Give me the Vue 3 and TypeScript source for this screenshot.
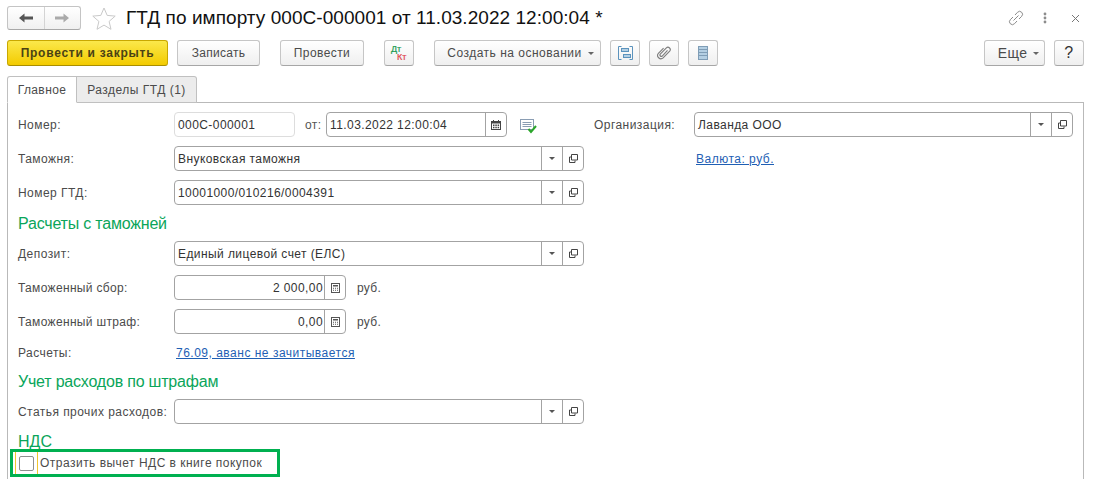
<script setup lang="ts">
const tools = ['Записать', 'Провести']
</script>

<template>
  <div class="page">
    <header class="titlebar">
      <div class="nav">
        <button class="nav-btn">
          <svg width="14" height="10" viewBox="0 0 14 10"><path d="M0 5 5.5 0.5V3.5H14V6.5H5.500V9.500Z" fill="#555" /></svg>
        </button>
        <button class="nav-btn">
          <svg width="14" height="10" viewBox="0 0 14 10"><path d="M14 5 8.500 0.500V3.500H0V6.500H8.500V9.500Z" fill="#aaa" /></svg>
        </button>
      </div>
      <svg class="star" width="24" height="23" viewBox="0 0 24 23"><path d="M12 1l3.200 7.400 8 .7-6.100 5.300 1.900 7.900L12 18.100 5 22.300l1.900-7.900L.8 9.100l8-.7z" fill="#fff" stroke="#c9c9c9" /></svg>
      <h1 class="title">ГТД по импорту 000С-000001 от 11.03.2022 12:00:04 *</h1>
      <div class="win-icons">
        <svg width="16" height="16" viewBox="0 0 16 16" fill="none" stroke="#8c8c8c" stroke-width="1"><path d="M7 5 9.500 2.300a2.900 2.900 0 0 1 4.200 4L11 9M9 11l-2.500 2.700a2.900 2.900 0 0 1-4.200-4L5 7M5.500 10.500l5-5" /></svg>
        <svg class="kebab" width="4" height="12" viewBox="0 0 4 12" fill="#8c8c8c"><circle cx="2" cy="2" r="1.400" /><circle cx="2" cy="6" r="1.400" /><circle cx="2" cy="10" r="1.400" /></svg>
        <svg class="close" width="9" height="9" viewBox="0 0 9 9" stroke="#777" fill="none"><path d="M1 1l7 7M8 1l-7 7" /></svg>
      </div>
    </header>

    <div class="toolbar">
      <button class="btn primary">Провести и закрыть</button>
      <button class="btn save">{{ tools[0] }}</button>
      <button class="btn post">{{ tools[1] }}</button>
      <button class="btn icon dtkt"><span class="dt">Дт</span><span class="kt">Кт</span></button>
      <button class="btn create">Создать на основании<i class="caret"></i></button>
      <button class="btn icon tight">
        <svg width="15" height="14" viewBox="0 0 15 14" fill="none" stroke="#5b93bd"><path d="M3.500.5h-3v13h3M11.500.5h3v13h-3" /><rect x="3.500" y="2.500" width="7" height="3" fill="#b4cfe3" /><rect x="5.500" y="8.500" width="7" height="3" fill="#b4cfe3" /></svg>
      </button>
      <button class="btn icon tight">
        <svg width="14" height="14" viewBox="0 0 16 16" fill="none" stroke="#7d7d7d" stroke-width="1.300"><path d="M12 5 6 11.500a1.600 1.600 0 0 1-2.300-2.200l7-7.200a2.700 2.700 0 0 1 3.800 3.800l-7.500 7.700a3.800 3.800 0 0 1-5.400-5.300L7.500 2.500" /></svg>
      </button>
      <button class="btn icon tight">
        <svg width="10" height="14" viewBox="0 0 10 14" stroke="#7f9db6" fill="#b4cfe3"><rect x=".5" y=".5" width="9" height="13" /><path d="M.5 3.500h9M.5 6.500h9M.5 9.500h9" fill="none" /></svg>
      </button>
      <div class="spacer"></div>
      <button class="btn more">Еще<i class="caret"></i></button>
      <button class="btn help">?</button>
    </div>

    <div class="tabs">
      <div class="tab active">Главное</div>
      <div class="tab">Разделы ГТД (1)</div>
    </div>

    <main class="panel">
      <div class="row">
        <label>Номер:</label>
        <div class="field readonly number"><span class="value">000С-000001</span></div>
        <span class="from">от:</span>
        <div class="field date">
          <span class="value">11.03.2022 12:00:04</span>
          <span class="cell cal">
            <svg width="10" height="10" viewBox="0 0 10 10"><path d="M0 1h10v9H0z" fill="#444" /><path d="M2.500 0v2M7.500 0v2" stroke="#444" /><path d="M1 3.500h8V9H1z" fill="#fff" /><path d="M2 4.500h1.500V6H2zM4.300 4.500h1.500V6H4.300zM6.600 4.500h1.500V6H6.600zM2 6.800h1.500v1.500H2zM4.300 6.800h1.500v1.500H4.300zM6.600 6.800h1.500v1.500H6.600z" fill="#444" /></svg>
          </span>
        </div>
        <svg class="comment" width="17" height="15" viewBox="0 0 17 15"><rect x=".5" y=".5" width="13" height="10" fill="#fff" stroke="#8a9db3" /><path d="M2.500 3.500h9M2.500 5.500h9M2.500 7.500h9" stroke="#8a9db3" /><path d="M8.500 10l2.500 3 5-6" fill="none" stroke="#2aa52a" stroke-width="2" /></svg>
        <label class="org-label">Организация:</label>
        <div class="field org">
          <span class="value">Лаванда ООО</span>
          <span class="cell arrow"><i class="caret small"></i></span>
          <span class="cell open"><svg width="9" height="9" viewBox="0 0 9 9" fill="none" stroke="#444"><path d="M2.500.500h6v5.500h-6zM2.500 3h-2v5.500H6V6.500" /></svg></span>
        </div>
      </div>

      <div class="row">
        <label>Таможня:</label>
        <div class="field wide">
          <span class="value">Внуковская таможня</span>
          <span class="cell arrow"><i class="caret small"></i></span>
          <span class="cell open"><svg width="9" height="9" viewBox="0 0 9 9" fill="none" stroke="#444"><path d="M2.500.500h6v5.500h-6zM2.500 3h-2v5.500H6V6.500" /></svg></span>
        </div>
        <a class="link currency">Валюта: руб.</a>
      </div>

      <div class="row">
        <label>Номер ГТД:</label>
        <div class="field wide">
          <span class="value">10001000/010216/0004391</span>
          <span class="cell arrow"><i class="caret small"></i></span>
          <span class="cell open"><svg width="9" height="9" viewBox="0 0 9 9" fill="none" stroke="#444"><path d="M2.500.500h6v5.500h-6zM2.500 3h-2v5.500H6V6.500" /></svg></span>
        </div>
      </div>

      <h2 class="section">Расчеты с таможней</h2>

      <div class="row">
        <label>Депозит:</label>
        <div class="field wide">
          <span class="value">Единый лицевой счет (ЕЛС)</span>
          <span class="cell arrow"><i class="caret small"></i></span>
          <span class="cell open"><svg width="9" height="9" viewBox="0 0 9 9" fill="none" stroke="#444"><path d="M2.500.500h6v5.500h-6zM2.500 3h-2v5.500H6V6.500" /></svg></span>
        </div>
      </div>

      <div class="row">
        <label class="snug">Таможенный сбор:</label>
        <div class="field sum">
          <span class="value right">2 000,00</span>
          <span class="cell calc"><svg width="9" height="10" viewBox="0 0 9 10"><rect x=".5" y=".5" width="8" height="9" fill="#fff" stroke="#555" /><path d="M2 2h5v1.500H2z" fill="#555" /><path d="M2 4.700h1v1H2zM4 4.700h1v1H4zM6 4.700h1v1H6zM2 6.800h1v1H2zM4 6.800h1v1H4zM6 6.800h1v1H6z" fill="#555" /></svg></span>
        </div>
        <span class="unit">руб.</span>
      </div>

      <div class="row">
        <label class="snug">Таможенный штраф:</label>
        <div class="field sum">
          <span class="value right">0,00</span>
          <span class="cell calc"><svg width="9" height="10" viewBox="0 0 9 10"><rect x=".5" y=".5" width="8" height="9" fill="#fff" stroke="#555" /><path d="M2 2h5v1.500H2z" fill="#555" /><path d="M2 4.700h1v1H2zM4 4.700h1v1H4zM6 4.700h1v1H6zM2 6.800h1v1H2zM4 6.800h1v1H4zM6 6.800h1v1H6z" fill="#555" /></svg></span>
        </div>
        <span class="unit">руб.</span>
      </div>

      <div class="row textrow">
        <label>Расчеты:</label>
        <a class="link settle">76.09, аванс не зачитывается</a>
      </div>

      <h2 class="section second">Учет расходов по штрафам</h2>

      <div class="row">
        <label>Статья прочих расходов:</label>
        <div class="field wide">
          <span class="value"></span>
          <span class="cell arrow"><i class="caret small"></i></span>
          <span class="cell open"><svg width="9" height="9" viewBox="0 0 9 9" fill="none" stroke="#444"><path d="M2.500.500h6v5.500h-6zM2.500 3h-2v5.500H6V6.500" /></svg></span>
        </div>
      </div>

      <h2 class="section third">НДС</h2>

      <div class="highlight">
        <span class="focus"><span class="checkbox"></span></span>
        <span class="check-label">Отразить вычет НДС в книге покупок</span>
      </div>
    </main>
  </div>
</template>

<style>
html, body { margin: 0; background: #fff; overflow: hidden; }
</style>

<style scoped>
.page {
  width: 1097px;
  height: 479px;
  overflow: hidden;
  background: #fff;
  font: 12px "Liberation Sans", Arial, sans-serif;
  color: #4b4b4b;
  display: flex;
  flex-direction: column;
}
.titlebar { display: flex; align-items: center; height: 24px; margin: 6px 0 0 7px; }
.nav {
  display: flex; width: 74px; height: 24px; box-sizing: border-box;
  border: 1px solid #c4c4c4; border-bottom-color: #a8a8a8; border-radius: 3px;
  background: linear-gradient(#fff, #f0f0f0);
}
.nav-btn { flex: 1; border: 0; background: none; padding: 0; display: flex; align-items: center; justify-content: center; }
.nav-btn + .nav-btn { border-left: 1px solid #d4d4d4; }
.star { margin-left: 11px; }
.title { margin: 0 0 0 10px; font-size: 19px; font-weight: 400; letter-spacing: .05px; color: #111; white-space: nowrap; }
.win-icons { margin-left: auto; display: flex; align-items: center; padding-right: 17px; }
.kebab { margin-left: 19px; }
.close { margin-left: 24px; }

.toolbar { display: flex; align-items: stretch; height: 26px; margin: 10px 13px 0 7px; }
.btn {
  box-sizing: border-box; height: 26px; padding: 0;
  border: 1px solid #c6c6c6; border-bottom-color: #a6a6a6; border-radius: 3px;
  background: linear-gradient(#fff, #efefef);
  font: 12px "Liberation Sans", Arial, sans-serif; letter-spacing: .4px; color: #4b4b4b;
  display: flex; align-items: center; justify-content: center;
}
.primary {
  width: 161px; font-weight: 700; color: #4a4214; letter-spacing: .74px;
  background: linear-gradient(#fbe84b, #f3cb00); border-color: #c9a800; border-bottom-color: #a98e00;
}
.save { width: 83px; margin-left: 9px; letter-spacing: .3px; }
.post { width: 84px; margin-left: 20px; }
.dtkt { width: 30px; margin-left: 20px; position: relative; }
.dt { position: absolute; left: 6px; top: 4px; font-size: 9px; line-height: 8px; color: #1b9a50; letter-spacing: 0; -webkit-text-stroke: .2px #1b9a50; }
.kt { position: absolute; left: 12px; top: 12px; font-size: 9px; line-height: 8px; color: #e0454a; letter-spacing: 0; -webkit-text-stroke: .2px #e0454a; }
.create { width: 167px; margin-left: 20px; padding-left: 6px; letter-spacing: .5px; }
.tight { width: 30px; margin-left: 9px; }
.spacer { flex: 1; }
.more { width: 61px; padding-left: 8px; font-size: 14px; }
.help { width: 30px; margin-left: 9px; font-size: 16px; color: #333; }
.caret {
  display: inline-block; margin-left: 6px; width: 0; height: 0;
  border: 3px solid transparent; border-top: 3px solid #666; border-bottom: 0;
}
.caret.small { margin: 0; border-top-color: #555; }

.tabs { display: flex; height: 27px; margin: 10px 0 0 7px; position: relative; z-index: 1; }
.tab {
  box-sizing: border-box; height: 27px; display: flex; align-items: center; justify-content: center;
  border: 1px solid #c0c0c0; border-left: 0; border-radius: 0 3px 0 0;
  background: #ececec; width: 120px; letter-spacing: .5px;
}
.tab.active { width: 70px; background: #fff; border-left: 1px solid #c0c0c0; border-bottom-color: #fff; border-radius: 3px 0 0 0; letter-spacing: .4px; }

.panel {
  flex: 1; margin: -1px 13px 0 7px; padding: 9px 10px 0 0;
  border: 1px solid #b9b9b9; border-bottom: 0;
  box-sizing: border-box;
}
.row { display: flex; align-items: center; height: 25px; margin-bottom: 9px; }
.row label { width: 156px; margin-left: 10px; flex: none; letter-spacing: .45px; white-space: nowrap; }
.row label.snug { letter-spacing: .33px; }
.field {
  box-sizing: border-box; height: 25px; display: flex; align-items: center;
  border: 1px solid #a3a3a3; border-radius: 4px; background: #fff; color: #333; letter-spacing: .42px; flex: none;
}
.value { flex: 1; padding: 0 3px; white-space: nowrap; min-width: 0; }
.right { text-align: right; padding-right: 1px; }
.cell { height: 100%; display: flex; align-items: center; justify-content: center; border-left: 1px solid #a3a3a3; box-sizing: border-box; }
.arrow, .cal { width: 21px; }
.open { width: 21px; }
.calc { width: 21px; }
.number { width: 121px; border-color: #ddd; }
.from { margin-left: 10px; width: 21px; color: #555; letter-spacing: .4px; }
.date { width: 181px; }
.comment { margin-left: 13px; margin-top: 4px; }
.row .org-label { width: 100px; margin-left: 57px; }
.org { width: 379px; }
.wide { width: 410px; }
.sum { width: 172px; }
.unit { margin-left: 11px; letter-spacing: .3px; }
.link { color: #1f5fb4; text-decoration: underline; letter-spacing: .5px; white-space: nowrap; }
.settle { margin-left: 2px; }
.currency { margin-left: 112px; }
.section { margin: -4px 0 4px 10px; height: 27px; line-height: 27px; font-size: 16px; font-weight: 400; letter-spacing: -.2px; color: #0aa55a; }
.textrow { height: 20px; margin-top: 9px; margin-bottom: 0; }
.second { margin-top: 5px; margin-bottom: 4px; }
.third { margin-top: -2px; margin-bottom: -4px; height: 22px; line-height: 22px; letter-spacing: 0; }
.highlight {
  box-sizing: border-box; width: 270px; height: 28px; margin-left: 2px;
  border: 3px solid #00b050; display: flex; align-items: center; position: relative;
}
.focus { box-sizing: border-box; width: 23px; height: 100%; margin-left: 2px; border: 1px solid #f1c62d; border-width: 0 1px; display: flex; align-items: center; justify-content: center; flex: none; }
.checkbox { box-sizing: border-box; width: 15px; height: 15px; border: 1px solid #8f8f8f; border-radius: 2px; background: #fff; }
.check-label { margin-left: 2px; letter-spacing: .48px; white-space: nowrap; }
</style>
